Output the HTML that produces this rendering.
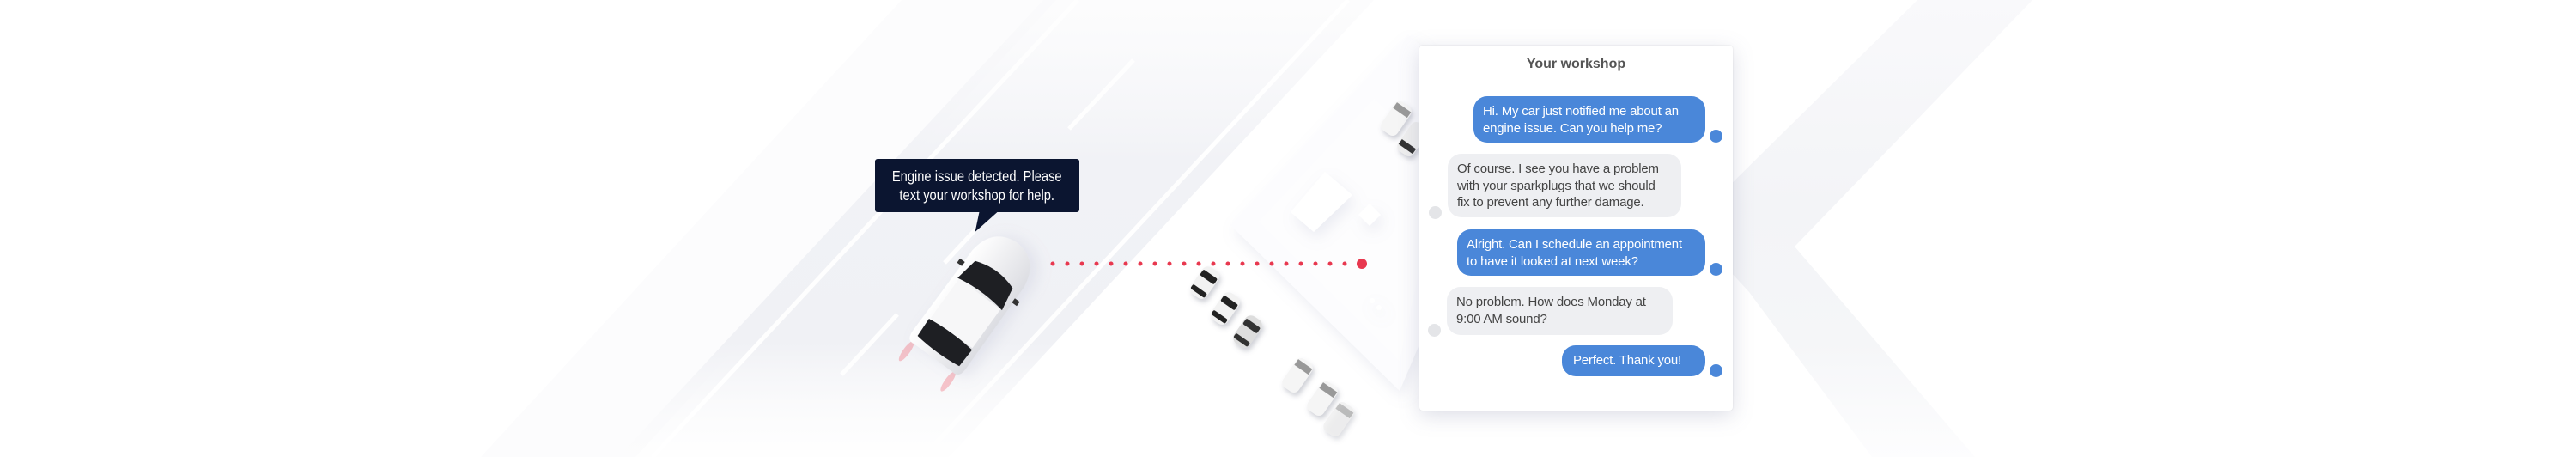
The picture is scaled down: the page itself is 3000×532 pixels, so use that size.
<!DOCTYPE html>
<html><head><meta charset="utf-8"><style>
html,body{margin:0;padding:0;background:#fff;}
body{width:3000px;height:532px;position:relative;overflow:hidden;font-family:"Liberation Sans",sans-serif;}
svg.bg{position:absolute;left:0;top:0;}
.tip{position:absolute;left:1019px;top:185px;width:238px;height:62px;background:#0b1530;border-radius:3px;color:#fff;text-align:center;box-sizing:border-box;padding-top:9px;}
.tip span{display:inline-block;font-size:17.5px;line-height:22px;transform:scaleX(0.84);white-space:nowrap;}
.tip:after{content:"";position:absolute;left:119px;top:62px;border-right:21px solid transparent;border-top:23px solid #0b1530;transform:skewX(-12deg);}
.chat{position:absolute;left:1653px;top:53px;width:365px;height:425px;background:#fff;border-radius:4px;box-shadow:0 6px 24px rgba(120,125,160,.25),0 0 2px rgba(0,0,0,.12);}
.hd{height:42px;border-bottom:1px solid #dcdde2;text-align:center;font-size:16px;font-weight:bold;color:#555;line-height:44px;}
.b{position:absolute;font-size:15px;line-height:19.5px;border-radius:16px;padding:8px 11px;box-sizing:border-box;white-space:nowrap;letter-spacing:-0.2px;}
.bl{background:#4a87d9;color:#fff;}
.gr{background:#eeeff2;color:#444;}
.d{position:absolute;width:15px;height:15px;border-radius:50%;}
</style></head><body>
<svg class="bg" width="3000" height="532" viewBox="0 0 3000 532">
<defs>
<linearGradient id="rd" x1="0" y1="0" x2="0" y2="1">
<stop offset="0" stop-color="#f8f8fa" stop-opacity="0.4"/>
<stop offset="0.35" stop-color="#f1f2f6"/>
<stop offset="0.75" stop-color="#f0f1f5"/>
<stop offset="1" stop-color="#fbfbfc" stop-opacity="0.2"/>
</linearGradient>
<linearGradient id="cv" x1="0" y1="0" x2="0" y2="1">
<stop offset="0" stop-color="#f9f9fb"/>
<stop offset="0.45" stop-color="#f3f4f7"/>
<stop offset="0.75" stop-color="#f5f6f8"/>
<stop offset="1" stop-color="#fdfdfe"/>
</linearGradient>
<filter id="sh" x="-30%" y="-30%" width="160%" height="160%"><feDropShadow dx="4" dy="8" stdDeviation="8" flood-color="#9a9fc0" flood-opacity="0.18"/></filter>
<filter id="sh2" x="-50%" y="-50%" width="200%" height="200%"><feDropShadow dx="2" dy="4" stdDeviation="3" flood-color="#60657a" flood-opacity="0.3"/></filter>
<linearGradient id="car" x1="0" y1="0" x2="0" y2="1"><stop offset="0" stop-color="#fff"/><stop offset="1" stop-color="#dcdde2"/></linearGradient>
</defs>
<polygon points="560,532 1050,0 1230,0 740,532" fill="#fafafc" opacity="0.6"/>
<polygon points="720,532 1215,0 1600,0 1105,532" fill="url(#rd)"/>
<g stroke="#fff" stroke-width="5" fill="none" opacity="0.95">
<line x1="760" y1="532" x2="1255" y2="0"/>
<line x1="1075" y1="532" x2="1570" y2="0"/>
<line x1="980" y1="436" x2="1045" y2="366"/>
<line x1="1100" y1="306" x2="1190" y2="209"/>
<line x1="1245" y1="150" x2="1320" y2="70"/>
</g>
<polygon points="2233,0 2367,0 2090,287 2300,532 2180,532 2037,340 2000,300 2000,230" fill="url(#cv)"/>
<g filter="url(#sh)">
<polygon points="1433,262 1640,40 1760,150 1630,455" fill="#fcfcfe"/>
<polygon points="1466,258 1600,115 1680,190 1630,420" fill="#fdfdfe"/>
</g>
<g filter="url(#sh)">
<polygon points="1503,247 1543,200 1575,227 1530,270" fill="#fff"/>
<polygon points="1582,250 1595,237 1608,250 1595,263" fill="#fff"/>
<circle cx="1598" cy="350" r="3" fill="#fff"/><circle cx="1606" cy="358" r="3" fill="#fff"/>
</g>
<g filter="url(#sh2)">
<g transform="translate(1403,329) rotate(-55)"><rect x="-19" y="-11" width="38" height="22" rx="8" fill="#f2f2f2"/><rect x="4" y="-10" width="8" height="20" rx="2" fill="#222"/><rect x="-15" y="-10" width="6" height="20" rx="2" fill="#222"/></g>
<g transform="translate(1427,359) rotate(-55)"><rect x="-19" y="-11" width="38" height="22" rx="8" fill="#f2f2f2"/><rect x="4" y="-10" width="8" height="20" rx="2" fill="#222"/><rect x="-15" y="-10" width="6" height="20" rx="2" fill="#222"/></g>
<g transform="translate(1453,386) rotate(-55)"><rect x="-19" y="-11" width="38" height="22" rx="8" fill="#ddd"/><rect x="4" y="-10" width="8" height="20" rx="2" fill="#333"/><rect x="-15" y="-10" width="6" height="20" rx="2" fill="#333"/></g>
<g transform="translate(1511,437) rotate(-55)"><rect x="-20" y="-11" width="40" height="22" rx="7" fill="#f5f5f5"/><rect x="8" y="-10" width="8" height="20" fill="#999"/></g>
<g transform="translate(1540,464) rotate(-55)"><rect x="-20" y="-11" width="40" height="22" rx="7" fill="#f5f5f5"/><rect x="8" y="-10" width="8" height="20" fill="#999"/></g>
<g transform="translate(1559,488) rotate(-55)" opacity="0.7"><rect x="-20" y="-11" width="40" height="22" rx="7" fill="#eee"/><rect x="8" y="-10" width="8" height="20" fill="#aaa"/></g>
<g transform="translate(1626,138) rotate(-55)"><rect x="-20" y="-11" width="40" height="22" rx="7" fill="#f5f5f5"/><rect x="8" y="-10" width="8" height="20" fill="#999"/></g>
<g transform="translate(1645,162) rotate(-55)"><rect x="-20" y="-11" width="40" height="22" rx="7" fill="#eee"/><rect x="-14" y="-10" width="7" height="20" fill="#333"/></g>
</g>
<g fill="#e8384f">
<circle cx="1226" cy="307" r="2.5"/><circle cx="1243" cy="307" r="2.5"/><circle cx="1260" cy="307" r="2.5"/><circle cx="1277" cy="307" r="2.5"/><circle cx="1294" cy="307" r="2.5"/><circle cx="1311" cy="307" r="2.5"/><circle cx="1328" cy="307" r="2.5"/><circle cx="1345" cy="307" r="2.5"/><circle cx="1362" cy="307" r="2.5"/><circle cx="1379" cy="307" r="2.5"/><circle cx="1396" cy="307" r="2.5"/><circle cx="1413" cy="307" r="2.5"/><circle cx="1430" cy="307" r="2.5"/><circle cx="1447" cy="307" r="2.5"/><circle cx="1464" cy="307" r="2.5"/><circle cx="1481" cy="307" r="2.5"/><circle cx="1498" cy="307" r="2.5"/><circle cx="1515" cy="307" r="2.5"/><circle cx="1532" cy="307" r="2.5"/><circle cx="1549" cy="307" r="2.5"/><circle cx="1566" cy="307" r="2.5"/>
<circle cx="1586" cy="307" r="6"/>
</g>
<g transform="translate(1134,352) rotate(-54)">
<ellipse cx="-92" cy="-30" rx="14" ry="4" fill="#f26070" opacity="0.35"/>
<ellipse cx="-92" cy="30" rx="14" ry="4" fill="#f26070" opacity="0.35"/>
<g filter="url(#sh)">
<path d="M-80,-28 Q-82,-38 -68,-38 L48,-37 Q84,-33 86,0 Q84,33 48,37 L-68,38 Q-82,38 -80,28 Z" fill="url(#car)"/>
</g>
<path d="M12,-32 L40,-27 Q50,0 40,27 L12,32 Q18,0 12,-32 Z" fill="#1e1f23"/>
<path d="M-70,-30 L-46,-31 Q-42,0 -46,31 L-70,30 Q-74,0 -70,-30 Z" fill="#1e1f23"/>
<rect x="-44" y="-30" width="56" height="60" fill="#f7f7f8"/>
<rect x="26" y="-43" width="6" height="7" fill="#333"/><rect x="26" y="36" width="6" height="7" fill="#333"/>
</g>
</svg>
<div class="tip"><span>Engine issue detected. Please<br>text your workshop for help.</span></div>
<div class="chat">
<div class="hd">Your workshop</div>
<div class="b bl" style="left:63px;top:59px;width:270px;height:54px;">Hi. My car just notified me about an<br>engine issue. Can you help me?</div>
<div class="d" style="left:338px;top:98px;background:#4a87d9"></div>
<div class="b gr" style="left:33px;top:126px;width:272px;height:74px;">Of course. I see you have a problem<br>with your sparkplugs that we should<br>fix to prevent any further damage.</div>
<div class="d" style="left:11px;top:187px;background:#e4e5e8"></div>
<div class="b bl" style="left:44px;top:214px;width:289px;height:54px;">Alright. Can I schedule an appointment<br>to have it looked at next week?</div>
<div class="d" style="left:338px;top:253px;background:#4a87d9"></div>
<div class="b gr" style="left:32px;top:281px;width:263px;height:56px;">No problem. How does Monday at<br>9:00 AM sound?</div>
<div class="d" style="left:10px;top:324px;background:#e4e5e8"></div>
<div class="b bl" style="left:166px;top:349px;width:167px;height:36px;padding-left:13px;">Perfect. Thank you!</div>
<div class="d" style="left:338px;top:371px;background:#4a87d9"></div>
</div>
</body></html>
